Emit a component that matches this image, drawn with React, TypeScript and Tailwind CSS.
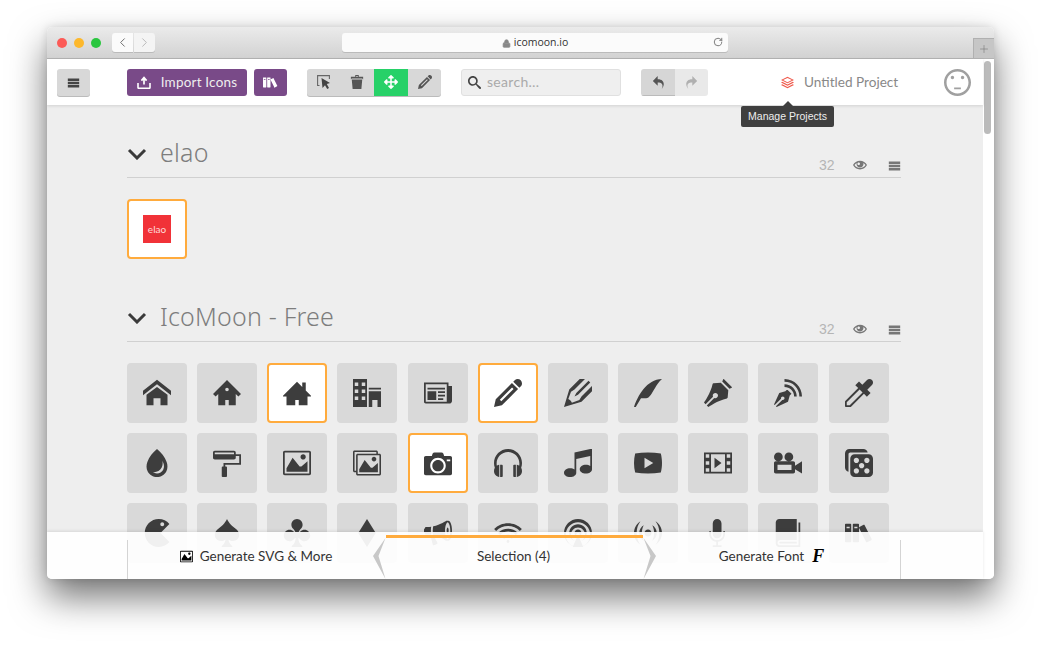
import React from "react";
import {
  ImHome, ImHome2, ImHome3, ImOffice, ImNewspaper, ImPencil, ImPencil2, ImQuill, ImPen, ImBlog, ImEyedropper,
  ImDroplet, ImPaintFormat, ImImage, ImImages, ImCamera, ImHeadphones, ImMusic, ImPlay, ImFilm, ImVideoCamera, ImDice,
  ImPacman, ImSpades, ImClubs, ImDiamonds, ImBullhorn, ImConnection, ImPodcast, ImFeed, ImMic, ImBook, ImBooks,
  ImMenu, ImBin2, ImSearch, ImUndo2, ImRedo2, ImStack, ImNeutral, ImEye,
} from "react-icons/im";
import { FaArrowsAlt } from "react-icons/fa";
import { ChevronLeft, ChevronRight, RotateCw, Lock, Plus } from "lucide-react";

const ROW1 = [ImHome, ImHome2, ImHome3, ImOffice, ImNewspaper, ImPencil, ImPencil2, ImQuill, ImPen, ImBlog, ImEyedropper];
const ROW2 = [ImDroplet, ImPaintFormat, ImImage, ImImages, ImCamera, ImHeadphones, ImMusic, ImPlay, ImFilm, ImVideoCamera, ImDice];
const ROW3 = [ImPacman, ImSpades, ImClubs, ImDiamonds, ImBullhorn, ImConnection, ImPodcast, ImFeed, ImMic, ImBook, ImBooks];
const SELECTED = new Set<unknown>([ImHome3, ImPencil, ImCamera]);

function Tile({ Icon }: { Icon: React.ComponentType<{ size?: number; className?: string }> }) {
  const selected = SELECTED.has(Icon);
  return (
    <div
      className={
        selected
          ? "w-[60px] h-[60px] rounded-[4px] bg-white border-2 border-[#ffab3d] flex items-center justify-center text-[#3d3d3d]"
          : "w-[60px] h-[60px] rounded-[4px] bg-[#d9d9d9] flex items-center justify-center text-[#3d3d3d]"
      }
    >
      <Icon size={28} />
    </div>
  );
}

function SetHeading({ title }: { title: string }) {
  return (
    <div className="h-[48px] border-b border-[#d0d0d0] flex">
      <svg width="20" height="12" viewBox="0 0 20 12" className="mt-[18px]">
        <path d="M2 2l8 8 8-8" fill="none" stroke="#3a3a3a" strokeWidth="3" />
      </svg>
      <span className="ml-[13px] text-[25px] leading-[44px] font-light text-[#7d7d7d] tracking-[0.2px] [font-family:'Noto_Sans',sans-serif]">{title}</span>
      <div className="ml-auto mt-[27px] flex items-center h-[16px] text-[#777]">
        <span className="text-[14px] text-[#b5b5b5] w-[15px] [font-family:'Liberation_Sans',sans-serif]">32</span>
        <ImEye size={14} className="ml-[19px]" />
        <ImMenu size={13} className="ml-[21px]" />
      </div>
    </div>
  );
}

function ToolBtn({ className = "", children }: { className?: string; children: React.ReactNode }) {
  return <div className={`h-[27px] flex items-center justify-center ${className}`}>{children}</div>;
}

export default function App() {
  return (
    <div className="w-[1040px] h-[646px] bg-white pt-[27px] pl-[47px] overflow-hidden [font-family:Lato,sans-serif]">
      <div className="w-[947px] h-[552px] flex flex-col rounded-[5px] overflow-hidden bg-white shadow-[0_18px_36px_rgba(0,0,0,0.55),0_0_8px_rgba(0,0,0,0.12)]">
        {/* Title bar */}
        <div className="h-[32px] flex shrink-0 bg-gradient-to-b from-[#ebebeb] to-[#d2d2d2] border-b border-[#b4b4b4]">
          <div className="flex items-center gap-[7px] ml-[10px] h-[32px]">
            <span className="w-[10px] h-[10px] rounded-full bg-[#fc5b57]" />
            <span className="w-[10px] h-[10px] rounded-full bg-[#fdb82c]" />
            <span className="w-[10px] h-[10px] rounded-full bg-[#2ac63f]" />
          </div>
          <div className="flex gap-[1px] ml-[11px] mt-[6px] h-[19px]">
            <div className="w-[21px] rounded-l-[3px] bg-[#fbfbfb] shadow-[0_1px_0_#bbb] flex items-center justify-center text-[#666]">
              <ChevronLeft size={15} strokeWidth={1.5} />
            </div>
            <div className="w-[21px] rounded-r-[3px] bg-[#f4f4f4] shadow-[0_1px_0_#bbb] flex items-center justify-center text-[#b5b5b5]">
              <ChevronRight size={15} strokeWidth={1.5} />
            </div>
          </div>
          <div className="w-[386px] h-[19px] ml-[187px] mt-[6px] pt-px rounded-[3px] bg-[#fbfbfb] shadow-[0_1px_0_#bbb] flex items-center justify-center relative">
            <Lock size={9} className="text-[#888] mr-[3px]" fill="#888" />
            <span className="text-[10.5px] text-[#333] [font-family:'Open_Sans',sans-serif]">icomoon.io</span>
            <RotateCw size={10} className="absolute right-[5px] top-[4px] text-[#666]" />
          </div>
          <div className="ml-auto mt-[11px] w-[21px] h-[20px] bg-[#c6c6c6] border-l border-t border-[#b0b0b0] flex items-center justify-center text-[#777]">
            <Plus size={12} strokeWidth={1.2} />
          </div>
        </div>

        {/* Body */}
        <div className="flex-1 flex min-h-0 relative">
          <div className="w-[936px] flex flex-col min-h-0">
            <div className="h-[46px] shrink-0 bg-white shadow-[0_1px_3px_rgba(0,0,0,0.12)] flex items-center pl-[10px] relative z-10">
              <ToolBtn className="w-[33px] rounded-[3px] bg-[#d8d8d8] shadow-[0_1px_0_#bbb] text-[#444]">
                <ImMenu size={13} />
              </ToolBtn>
              <ToolBtn className="w-[120px] ml-[37px] rounded-[3px] bg-[#794a88] text-[13.5px]">
                <svg width="14" height="13" viewBox="0 0 14 13" className="mr-[10px]">
                  <path d="M1 7v4.5a.8.8 0 0 0 .8.8h10.4a.8.8 0 0 0 .8-.8V7" fill="none" stroke="#fff" strokeWidth="1.6" />
                  <path d="M7 8.5V2.5M4.4 4.6L7 1.6l2.6 3" fill="none" stroke="#fff" strokeWidth="1.7" />
                </svg>
                <span className="text-[#eee] tracking-[0.2px]">Import Icons</span>
              </ToolBtn>
              <ToolBtn className="w-[33px] ml-[7px] rounded-[3px] bg-[#794a88] text-white">
                <ImBooks size={15} />
              </ToolBtn>
              <div className="ml-[20px] h-[27px] w-[134px] flex rounded-[3px] overflow-hidden bg-[#d8d8d8] shadow-[0_1px_0_#bbb] text-[#555]">
                <ToolBtn className="w-[33px]">
                  <svg width="14" height="14" viewBox="0 0 14 14">
                    <path d="M2.5 10.5H.6V.6h11.8v3.5" fill="none" stroke="#666" strokeWidth="1.1" />
                    <path d="M4.5 3l8.5 5-3.2 1L12 13l-1.8 1-2.2-3.8L5.5 13z" fill="#444" />
                  </svg>
                </ToolBtn>
                <ToolBtn className="w-[34px]"><ImBin2 size={14} /></ToolBtn>
                <ToolBtn className="w-[34px] bg-[#27d168] text-white"><FaArrowsAlt size={14} /></ToolBtn>
                <ToolBtn className="w-[33px]"><ImPencil size={14} /></ToolBtn>
              </div>
              <div className="ml-[20px] w-[160px] h-[27px] rounded-[3px] bg-[#efefef] border border-[#e0e0e0] flex items-center pl-[6px]">
                <ImSearch size={13} className="text-[#444]" />
                <span className="ml-[6px] -mt-px text-[14px] tracking-[0.3px] text-[#aaa]">search…</span>
              </div>
              <div className="ml-[20px] h-[27px] w-[67px] flex rounded-[3px] overflow-hidden">
                <ToolBtn className="w-[34px] bg-[#d6d6d6] shadow-[inset_0_-1px_0_#bbb] text-[#555]"><ImUndo2 size={13} /></ToolBtn>
                <ToolBtn className="w-[33px] bg-[#e9e9e9] text-[#b0b0b0]"><ImRedo2 size={13} /></ToolBtn>
              </div>
              <ImStack size={13} className="ml-[73px] text-[#ef5a4c]" />
              <span className="ml-[10px] w-[96px] whitespace-nowrap text-[13.6px] text-[#888]">Untitled Project</span>
              <ImNeutral size={27} className="ml-[44px] text-[#a0a0a0]" />
            </div>

            <div className="flex-1 min-h-0 overflow-hidden bg-[#eeeeee] pt-[25px] pl-[80px] pr-[82px]">
              <SetHeading title="elao" />
              <div className="mt-[21px]">
                <div className="w-[60px] h-[60px] rounded-[4px] bg-white border-2 border-[#ffab3d] flex items-center justify-center">
                  <div className="w-[28px] h-[28px] bg-[#f13238] flex items-center justify-center text-[10px] text-[#ffd9da]">elao</div>
                </div>
              </div>
              <div className="mt-[35px]">
                <SetHeading title="IcoMoon - Free" />
              </div>
              <div className="mt-[21px] grid grid-cols-[repeat(11,60px)] gap-y-[10px] gap-x-[10.17px]">
                {[...ROW1, ...ROW2, ...ROW3].map((I, i) => (
                  <Tile key={i} Icon={I} />
                ))}
              </div>
            </div>
          </div>

          {/* Scrollbar */}
          <div className="w-[11px] bg-white pt-[2px] pl-[1px]">
            <div className="w-[7px] h-[73px] rounded-full bg-[#bbbbbb]" />
          </div>

          {/* Tooltip */}
          <div className="absolute left-[694px] top-[47px] z-20">
            <div className="w-0 h-0 mx-auto border-x-[5px] border-x-transparent border-b-[5px] border-b-[#3f3f3f] -mt-[5px]" />
            <div className="w-[93px] h-[21px] pt-px rounded-[2px] bg-[#3f3f3f] text-[#eee] text-[10.5px] flex items-center justify-center [font-family:'Liberation_Sans',sans-serif]">
              Manage Projects
            </div>
          </div>

          {/* Bottom bar */}
          <div className="absolute left-0 bottom-0 w-[936px] h-[47px] bg-white/[0.92] shadow-[0_-1px_3px_rgba(0,0,0,0.1)] z-10 text-[13.5px] text-[#333]">
            <div className="absolute left-[80px] top-[8px] bottom-0 w-[774px] border-x border-[#d4d4d4] flex">
              <div className="w-[245px] flex items-center justify-center pb-[7px] pl-[11px]">
                <ImImage size={13} className="text-black mr-[7px]" />
                Generate SVG &amp; More
              </div>
              <div className="w-[270px] flex items-center justify-center relative pb-[7px] pl-[11px]">
                <div className="absolute left-[13px] -top-[5px] h-[3px] bg-[#ffab3d] w-[257px]" />
                <svg width="13" height="41" viewBox="0 0 13 41" className="absolute left-0 -top-[2px]">
                  <path d="M12.5 0L0 18l12.5 23-7-23z" fill="#c8c8c8" />
                </svg>
                <svg width="13" height="41" viewBox="0 0 13 41" className="absolute right-[-13px] -top-[2px]">
                  <path d="M.5 0L13 18 .5 41l7-23z" fill="#c8c8c8" />
                </svg>
                Selection (4)
              </div>
              <div className="flex-1 flex items-center justify-center pb-[7px]">
                Generate Font
                <span className="ml-[8px] text-[18px] leading-none font-bold italic text-black [font-family:'Liberation_Serif',serif]">F</span>
              </div>
            </div>
          </div>
        </div>
      </div>
    </div>
  );
}
